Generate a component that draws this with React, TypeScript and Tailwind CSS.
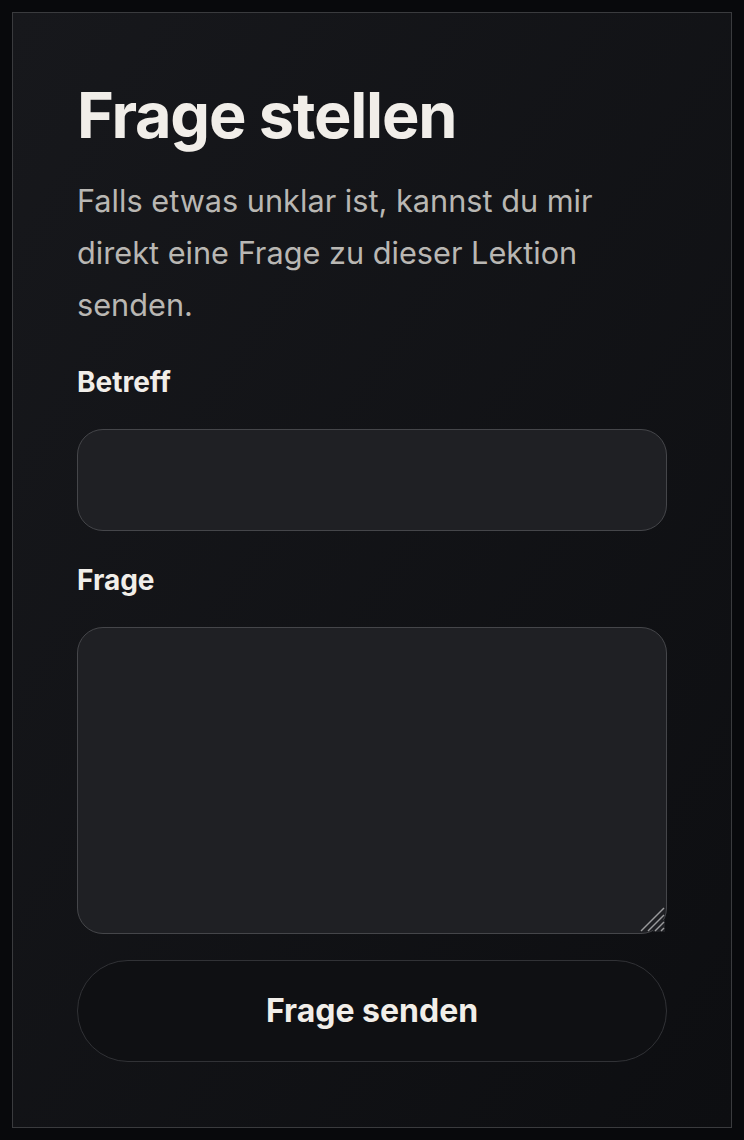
import React from "react";

export default function App() {
  return (
    <div
      className="min-h-[1140px] w-full bg-[#08090c] p-3"
      style={{ fontFamily: "Inter, 'Noto Sans', sans-serif" }}
    >
      <div className="flex min-h-[1116px] flex-col border border-[#3a3b3e] bg-gradient-to-br from-[#17181c] to-[#0d0e11] px-16 pt-[64px] pb-12">
        <h1 className="text-[63px] font-bold leading-[76px] tracking-[-0.02em] text-[#f1eee9]">
          Frage stellen
        </h1>
        <p className="mt-[22px] text-[30.7px] leading-[52px] text-[#b9b7b3]">
          Falls etwas unklar ist, kannst du mir direkt eine Frage zu dieser Lektion senden.
        </p>
        <label className="mt-[36px] text-[28px] font-bold leading-[30px] text-[#f1eee9]">
          Betreff
        </label>
        <input
          type="text"
          className="mt-[32px] h-[102px] w-full rounded-[26px] border-[1.5px] border-[#45464a] bg-[#1f2024] px-6 text-[24px] text-[#f1eee9] outline-none"
        />
        <label className="mt-[34px] text-[28px] font-bold leading-[30px] text-[#f1eee9]">
          Frage
        </label>
        <div className="relative mt-[32px]">
          <textarea className="block h-[307px] w-full resize-none rounded-[26px] border-[1.5px] border-[#45464a] bg-[#1f2024] px-6 py-4 text-[24px] text-[#f1eee9] outline-none" />
          <svg
            className="pointer-events-none absolute bottom-[2px] right-[2px]"
            width="26"
            height="26"
            viewBox="0 0 26 26"
          >
            <rect x="14" y="14" width="12" height="12" fill="#1f2024" />
            <g stroke="#9a9a9c" strokeWidth="1.4">
              <line x1="25" y1="2" x2="2" y2="25" />
              <line x1="25" y1="9" x2="9" y2="25" />
              <line x1="25" y1="16" x2="16" y2="25" />
              <line x1="25" y1="22" x2="22" y2="25" />
            </g>
          </svg>
        </div>
        <button className="mt-[26px] h-[102px] w-full rounded-full border-[1.5px] border-[#313236] bg-[#0f1013] text-[32px] font-bold text-[#f1eee9]">
          Frage senden
        </button>
      </div>
    </div>
  );
}
